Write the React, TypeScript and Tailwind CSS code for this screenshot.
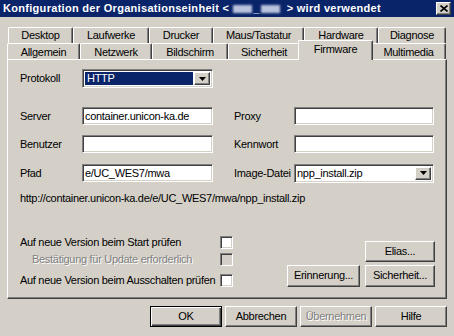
import React from "react";

const sunken =
  "border border-t-[#808080] border-l-[#808080] border-b-white border-r-white shadow-[inset_1px_1px_0_#404040,inset_-1px_-1px_0_#d4d0c8]";
const raised =
  "border border-t-white border-l-white border-b-[#404040] border-r-[#404040] shadow-[inset_-1px_-1px_0_#808080] bg-[#d4d0c8]";

function DownArrow() {
  return (
    <div className={`${raised} w-[16px] h-full flex items-center justify-center`}>
      <svg width="7" height="4" viewBox="0 0 7 4">
        <path d="M0 0h7L3.5 4z" fill="#000" />
      </svg>
    </div>
  );
}

function Field({ value = "", w }: { value?: string; w: string }) {
  return (
    <div className={`${sunken} ${w} h-[18px] bg-white flex items-center pl-[2px] overflow-hidden whitespace-nowrap`}>
      {value}
    </div>
  );
}

function Check({ disabled }: { disabled?: boolean }) {
  return <div className={`${sunken} w-[13px] h-[13px] shrink-0 ${disabled ? "bg-[#d4d0c8]" : "bg-white"}`} />;
}

function Btn({ label, w = "w-[72px]", h = "h-[21px]", muted }: { label: string; w?: string; h?: string; muted?: boolean }) {
  return (
    <div className={`${raised} ${w} ${h} flex items-center justify-center ${muted ? "text-[#808080] [text-shadow:1px_1px_0_#fff]" : ""}`}>
      {label}
    </div>
  );
}

function Tab({ label, w, selected }: { label: string; w: string; selected?: boolean }) {
  return (
    <div
      className={`${w} h-full flex items-center justify-center border-l border-t border-l-white border-t-white border-r border-r-[#404040] shadow-[inset_-1px_0_0_#808080] rounded-tl-[2px] rounded-tr-[2px] bg-[#d4d0c8] ${
        selected ? "relative z-10 -mx-[2px] !h-[20px] pb-[2px]" : ""
      }`}
    >
      {label}
    </div>
  );
}

export default function App() {
  return (
    <div className="w-[454px] h-[336px] bg-[#d4d0c8] overflow-hidden flex flex-col text-[11px] tracking-[-0.3px] text-black font-['Liberation_Sans',Arial,sans-serif] leading-[13px] whitespace-nowrap">
      {/* Title bar */}
      <div className="h-[17px] bg-[#0a246a] flex items-center pl-[3px] pr-[3px] text-white font-bold tracking-[0.3px]">
        <span>Konfiguration der Organisationseinheit &lt;</span>
        <span className="ml-[4px] w-[19px] h-[8px] bg-[#b9c2dc] blur-[1px]" />
        <span className="mx-[1px]">_</span>
        <span className="w-[19px] h-[8px] bg-[#b9c2dc] blur-[1px]" />
        <span className="ml-[7px]">&gt; wird verwendet</span>
        <div className={`${raised} ml-auto w-[15px] h-[13px] flex items-center justify-center`}>
          <svg width="8" height="7" viewBox="0 0 8 7">
            <path d="M0.5 0.5l7 6M7.5 0.5l-7 6" stroke="#000" strokeWidth="1.6" />
          </svg>
        </div>
      </div>

      {/* Tabs */}
      <div className="mt-[10px] h-[16px] flex pl-[8px]">
        <Tab label="Desktop" w="w-[65px]" />
        <Tab label="Laufwerke" w="w-[76px]" />
        <Tab label="Drucker" w="w-[64px]" />
        <Tab label="Maus/Tastatur" w="w-[91px]" />
        <Tab label="Hardware" w="w-[74px]" />
        <Tab label="Diagnose" w="w-[68px]" />
      </div>
      <div className="h-[17px] flex items-end pl-[7px] -mb-px">
        <Tab label="Allgemein" w="w-[73px]" />
        <Tab label="Netzwerk" w="w-[72px]" />
        <Tab label="Bildschirm" w="w-[76px]" />
        <Tab label="Sicherheit" w="w-[72px]" />
        <Tab label="Firmware" w="w-[75px]" selected />
        <Tab label="Multimedia" w="w-[75px]" />
      </div>

      {/* Panel */}
      <div className="ml-[7px] w-[440px] h-[240px] border border-t-white border-l-white border-b-[#404040] border-r-[#404040] shadow-[inset_-1px_-1px_0_#808080] flex flex-col pl-[12px] pr-[11px]">
        <div className="mt-[9px] h-[19px] flex items-center">
          <span className="w-[62px]">Protokoll</span>
          <div className={`${sunken} w-[131px] h-[19px] bg-white flex p-[2px]`}>
            <div className="flex-1 bg-[#0a246a] text-white flex items-center pl-[2px] mr-[1px]">HTTP</div>
            <DownArrow />
          </div>
        </div>

        <div className="mt-[19px] h-[18px] flex items-center">
          <span className="w-[62px]">Server</span>
          <Field value="container.unicon-ka.de" w="w-[131px]" />
          <span className="w-[60px] ml-[21px]">Proxy</span>
          <Field w="w-[140px]" />
        </div>

        <div className="mt-[10px] h-[18px] flex items-center">
          <span className="w-[62px]">Benutzer</span>
          <Field w="w-[131px]" />
          <span className="w-[60px] ml-[21px]">Kennwort</span>
          <Field w="w-[140px]" />
        </div>

        <div className="mt-[11px] h-[18px] flex items-center">
          <span className="w-[62px]">Pfad</span>
          <Field value="e/UC_WES7/mwa" w="w-[131px]" />
          <span className="w-[60px] ml-[21px] text-right pr-[8px]">Image-Datei</span>
          <div className={`${sunken} w-[140px] h-[19px] bg-white flex items-center p-[2px]`}>
            <span className="flex-1">npp_install.zip</span>
            <DownArrow />
          </div>
        </div>

        <div className="mt-[10px] h-[13px]">http://container.unicon-ka.de/e/UC_WES7/mwa/npp_install.zip</div>

        <div className="flex">
          <div className="mt-[31px] w-[213px] flex flex-col">
            <div className="h-[13px] flex items-center justify-between">
              <span>Auf neue Version beim Start prüfen</span>
              <Check />
            </div>
            <div className="mt-[4px] h-[13px] flex items-center justify-between">
              <span className="pl-[12px] text-[#808080] [text-shadow:1px_1px_0_#fff]">Bestätigung für Update erforderlich</span>
              <Check disabled />
            </div>
            <div className="mt-[8px] h-[13px] flex items-center justify-between">
              <span>Auf neue Version beim Ausschalten prüfen</span>
              <Check />
            </div>
          </div>
          <div className="ml-auto mt-[36px] grid grid-cols-[73px_70px] gap-x-[5px] gap-y-[2px]">
            <div />
            <Btn label="Elias..." w="w-[70px]" />
            <Btn label="Erinnerung..." w="w-[73px]" h="h-[22px]" />
            <Btn label="Sicherheit..." w="w-[70px]" h="h-[22px]" />
          </div>
        </div>
      </div>

      {/* Footer buttons */}
      <div className="mt-[7px] flex gap-[3px] pl-[150px]">
        <div className="w-[72px] h-[21px] border border-black shadow-[inset_1px_1px_0_#fff,inset_-1px_-1px_0_#404040,inset_-2px_-2px_0_#808080] flex items-center justify-center">
          OK
        </div>
        <Btn label="Abbrechen" />
        <Btn label="Übernehmen" muted />
        <Btn label="Hilfe" />
      </div>
    </div>
  );
}
